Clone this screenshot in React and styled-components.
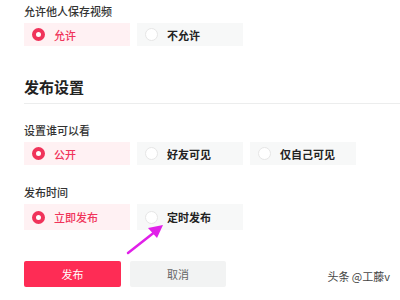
import React from "react";
import styled, { createGlobalStyle } from "styled-components";

const Global = createGlobalStyle`
  body {
    margin: 0;
    background: #fff;
    font-family: "Noto Sans CJK SC", "Noto Sans", sans-serif;
  }
`;

const Page = styled.div`
  position: relative;
  width: 400px;
  height: 300px;
  overflow: hidden;
  padding: 3px 0 0 24px;
  box-sizing: border-box;
`;

const FieldLabel = styled.div`
  font-size: 11px;
  line-height: 16px;
  color: #333;
  font-weight: 500;
  margin-top: ${p => p.gap || 0}px;
`;

const Heading = styled.div`
  margin-top: 30px;
  font-size: 15px;
  line-height: 22px;
  font-weight: 700;
  color: #222;
  padding-bottom: 5px;
  border-bottom: 1px solid #eceded;
`;

const Options = styled.div`
  display: flex;
  gap: 7px;
  margin-top: 4px;
`;

const Option = styled.div`
  width: 106px;
  height: ${p => p.h || 23}px;
  box-sizing: border-box;
  display: flex;
  align-items: center;
  gap: 9px;
  padding-left: 8px;
  background: ${p => (p.active ? "#fff1f3" : "#f7f8f8")};
  color: ${p => (p.active ? "#f0335a" : "#222")};
  font-size: 11px;
  font-weight: ${p => (p.active ? 500 : 700)};
`;

const Radio = styled.span`
  width: 13px;
  height: 13px;
  border-radius: 50%;
  box-sizing: border-box;
  border: ${p => (p.active ? "4px solid #f0335a" : "1px solid #e6e6e6")};
  background: #fff;
  flex-shrink: 0;
`;

const Actions = styled.div`
  display: flex;
  gap: 9px;
  margin-top: 31px;
`;

const Button = styled.button`
  width: ${p => (p.primary ? 97 : 96)}px;
  height: 26px;
  border: none;
  border-radius: 2px;
  font-family: inherit;
  font-size: 11px;
  background: ${p => (p.primary ? "#fe2c55" : "#f2f3f3")};
  color: ${p => (p.primary ? "#fff" : "#666")};
  padding: 0;
`;

const Watermark = styled.div`
  position: absolute;
  right: 10px;
  bottom: 16px;
  font-size: 11px;
  color: #444;
`;

const Arrow = styled.svg`
  position: absolute;
  left: 120px;
  top: 215px;
`;

const Choice = ({ label, active, h }) => (
  <Option active={active} h={h}>
    <Radio active={active} />
    {label}
  </Option>
);

export default function App() {
  return (
    <Page>
      <Global />
      <FieldLabel>允许他人保存视频</FieldLabel>
      <Options>
        <Choice label="允许" active />
        <Choice label="不允许" />
      </Options>
      <Heading>发布设置</Heading>
      <FieldLabel gap={18}>设置谁可以看</FieldLabel>
      <Options>
        <Choice label="公开" active />
        <Choice label="好友可见" />
        <Choice label="仅自己可见" />
      </Options>
      <FieldLabel gap={19}>发布时间</FieldLabel>
      <Options>
        <Choice label="立即发布" active h={26} />
        <Choice label="定时发布" h={26} />
      </Options>
      <Actions>
        <Button primary>发布</Button>
        <Button>取消</Button>
      </Actions>
      <Watermark>头条 @工藤v</Watermark>
      <Arrow width="50" height="45" viewBox="0 0 50 45">
        <line x1="8" y1="38" x2="36" y2="16" stroke="#e020e8" strokeWidth="2.5" strokeLinecap="round" />
        <polygon points="43,10 28,13 37,23" fill="#e020e8" />
      </Arrow>
    </Page>
  );
}
